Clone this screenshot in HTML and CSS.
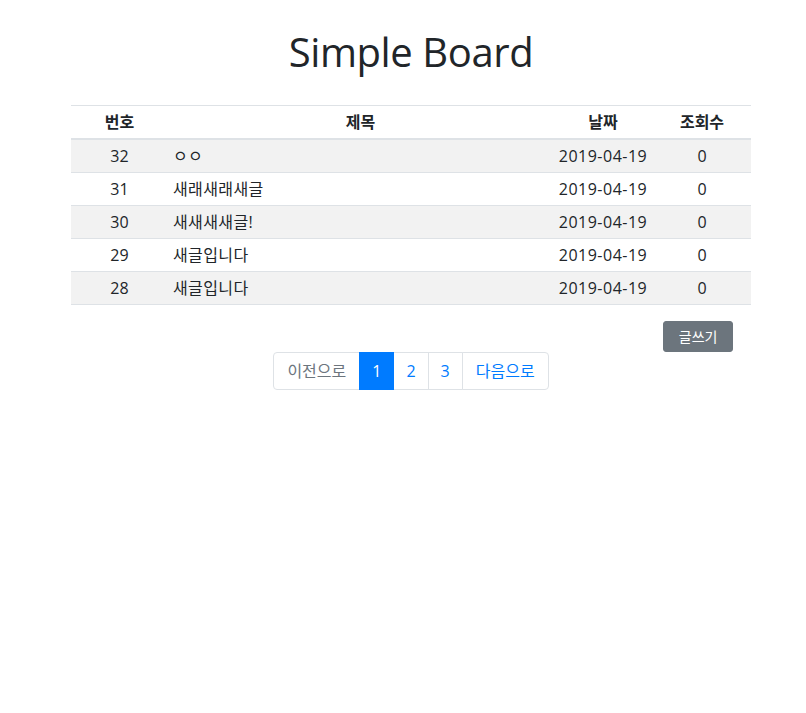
FILE: index.html
```html
<!DOCTYPE html>
<html lang="ko">
<head>
<meta charset="utf-8">
<title>Simple Board</title>
<link rel="stylesheet" href="styles.css">
</head>
<body>
<div class="page">
  <div class="container">
    <h1 class="title">Simple Board</h1>
    <table class="board">
      <colgroup>
        <col class="c-no"><col class="c-title"><col class="c-date"><col class="c-views">
      </colgroup>
      <thead>
        <tr><th>번호</th><th>제목</th><th>날짜</th><th>조회수</th></tr>
      </thead>
      <tbody>
        <tr><td class="num">32</td><td class="subj">ㅇㅇ</td><td class="date">2019-04-19</td><td class="num">0</td></tr>
        <tr><td class="num">31</td><td class="subj">새래새래새글</td><td class="date">2019-04-19</td><td class="num">0</td></tr>
        <tr><td class="num">30</td><td class="subj">새새새새글!</td><td class="date">2019-04-19</td><td class="num">0</td></tr>
        <tr><td class="num">29</td><td class="subj">새글입니다</td><td class="date">2019-04-19</td><td class="num">0</td></tr>
        <tr><td class="num">28</td><td class="subj">새글입니다</td><td class="date">2019-04-19</td><td class="num">0</td></tr>
      </tbody>
    </table>
    <div class="actions">
      <button class="btn-write" type="button">글쓰기</button>
    </div>
    <ul class="pagination">
      <li class="page-item disabled"><span class="page-link wide">이전으로</span></li>
      <li class="page-item active"><span class="page-link">1</span></li>
      <li class="page-item"><span class="page-link">2</span></li>
      <li class="page-item"><span class="page-link">3</span></li>
      <li class="page-item"><span class="page-link wide">다음으로</span></li>
    </ul>
  </div>
</div>
</body>
</html>
```

FILE: styles.css
```css
html, body {
  margin: 0;
  padding: 0;
  background: #fff;
}

body {
  font-family: "Open Sans", "Noto Sans CJK KR", sans-serif;
  font-size: 16px;
  line-height: 24px;
  color: #212529;
}

.page {
  padding-left: 16px;
}

.container {
  width: 680px;
  margin: 0 auto;
}

.title {
  margin: 28px 0 29px;
  font-size: 40px;
  line-height: 48px;
  font-weight: 400;
  text-align: center;
  letter-spacing: -0.4px;
}

.board {
  width: 100%;
  border-collapse: collapse;
  margin-bottom: 16px;
}

.c-no { width: 97px; }
.c-title { width: 385px; }
.c-date { width: 100px; }
.c-views { width: 98px; }

.board th,
.board td {
  padding: 4px 5px;
  line-height: 24px;
  border-top: 1px solid #dee2e6;
  vertical-align: top;
}

.board th {
  font-weight: 700;
  text-align: center;
  border-bottom: 2px solid #dee2e6;
}

.board tbody tr:nth-child(odd) {
  background: #f2f2f2;
}

.board tbody tr:last-child td {
  border-bottom: 1px solid #dee2e6;
}

.num,
.date {
  text-align: center;
}

.date {
  letter-spacing: 0.5px;
}

.subj {
  text-align: left;
  letter-spacing: 0.4px;
}

.actions {
  display: flex;
  justify-content: flex-end;
  padding-right: 18px;
}

.btn-write {
  font-family: inherit;
  font-size: 14px;
  line-height: 21px;
  padding: 4px 14.5px;
  color: #fff;
  background: #6c757d;
  border: 1px solid #6c757d;
  border-radius: 3px;
  cursor: pointer;
}

.pagination {
  display: flex;
  justify-content: center;
  list-style: none;
  margin: 0;
  padding: 0;
}

.page-link {
  display: block;
  padding: 8px 12px;
  line-height: 20px;
  color: #007bff;
  background: #fff;
  border: 1px solid #dee2e6;
  margin-left: -1px;
}

.page-link.wide {
  padding: 8px 13px;
}

.page-item:first-child .page-link {
  margin-left: 0;
  border-radius: 4px 0 0 4px;
}

.page-item:last-child .page-link {
  border-radius: 0 4px 4px 0;
}

.page-item.active .page-link {
  color: #fff;
  background: #007bff;
  border-color: #007bff;
  position: relative;
  z-index: 1;
}

.page-item.disabled .page-link {
  color: #6c757d;
}
```
